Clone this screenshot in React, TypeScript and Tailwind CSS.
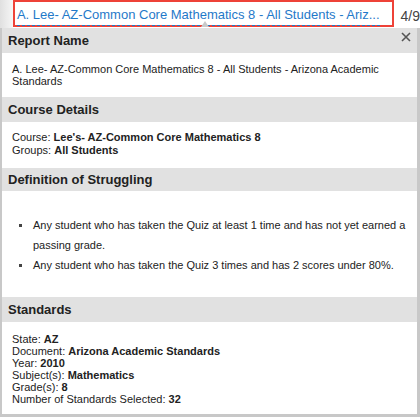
import React from 'react'

function SectionHeader({ title, h, children }: { title: string; h: string; children?: React.ReactNode }) {
  return (
    <div className={`relative flex items-center bg-[#e1e1e1] pl-[6px] text-[13px] font-bold text-[#222] ${h}`}>
      {title}
      {children}
    </div>
  )
}

function Bullet({ children }: { children: React.ReactNode }) {
  return (
    <li className="flex">
      <span className="flex h-[20px] w-[14px] shrink-0 items-center">
        <span className="h-[3px] w-[3px] bg-[#444]" />
      </span>
      <span>{children}</span>
    </li>
  )
}

export default function App() {
  return (
    <div className="relative h-[418px] w-[420px] overflow-hidden bg-white font-['Liberation_Sans',Arial,sans-serif] text-[#222]">
      {/* Titelzeile mit markiertem Link */}
      <div className="flex h-[28px]">
        <div className="w-[13px] bg-gradient-to-r from-[#e0e0e0] to-[#f6f6f6]" />
        <div className="h-[27px] w-[384px] border-2 border-[#ee4238] bg-white pl-[2px]">
          <span className="inline-block border-b border-dashed border-[#1f79c9] text-[13px] leading-[21px] text-[#1f79c9]">
            A. Lee- AZ-Common Core Mathematics 8 - All Students - Ariz...
          </span>
        </div>
        <div className="pl-[7px] pt-[8px] text-[14px] leading-[16px] whitespace-nowrap text-[#444]">4/9</div>
      </div>

      {/* Pfeil des Popovers */}
      <div className="absolute left-[201px] top-[21px] h-0 w-0 border-x-[4px] border-b-[6px] border-x-transparent border-b-[#c9c9c9]" />

      {/* Popover */}
      <div className="h-[389px] w-[420px] border-b-[3px] border-l-2 border-r-[3px] border-[#c8c8c8] bg-white">
        <SectionHeader title="Report Name" h="h-[25px]">
          <button className="absolute right-[5px] top-[3px] p-[1px] text-[#555]" aria-label="Close">
            <svg width="10" height="10" viewBox="0 0 10 10" fill="none" stroke="currentColor" strokeWidth={1.6}>
              <path d="M1 1l8 8M9 1l-8 8" />
            </svg>
          </button>
        </SectionHeader>
        <div className="h-[44px] px-[10px] pt-[10px] text-[11px] leading-[12px]">
          A. Lee- AZ-Common Core Mathematics 8 - All Students - Arizona Academic Standards
        </div>

        <SectionHeader title="Course Details" h="h-[25px]" />
        <div className="h-[46px] px-[10px] pt-[9px] text-[11px] leading-[12.5px]">
          <div>
            Course: <b>Lee's- AZ-Common Core Mathematics 8</b>
          </div>
          <div>
            Groups: <b>All Students</b>
          </div>
        </div>

        <SectionHeader title="Definition of Struggling" h="h-[23px]" />
        <div className="h-[106px] pt-[24px] text-[11px] leading-[20px]">
          <ul className="ml-[17px] pr-[10px]">
            <Bullet>Any student who has taken the Quiz at least 1 time and has not yet earned a passing grade.</Bullet>
            <Bullet>Any student who has taken the Quiz 3 times and has 2 scores under 80%.</Bullet>
          </ul>
        </div>

        <SectionHeader title="Standards" h="h-[25px]" />
        <div className="px-[10px] pt-[11px] text-[11px] leading-[12px]">
          <div>
            State: <b>AZ</b>
          </div>
          <div>
            Document: <b>Arizona Academic Standards</b>
          </div>
          <div>
            Year: <b>2010</b>
          </div>
          <div>
            Subject(s): <b>Mathematics</b>
          </div>
          <div>
            Grade(s): <b>8</b>
          </div>
          <div>
            Number of Standards Selected: <b>32</b>
          </div>
        </div>
      </div>
    </div>
  )
}
